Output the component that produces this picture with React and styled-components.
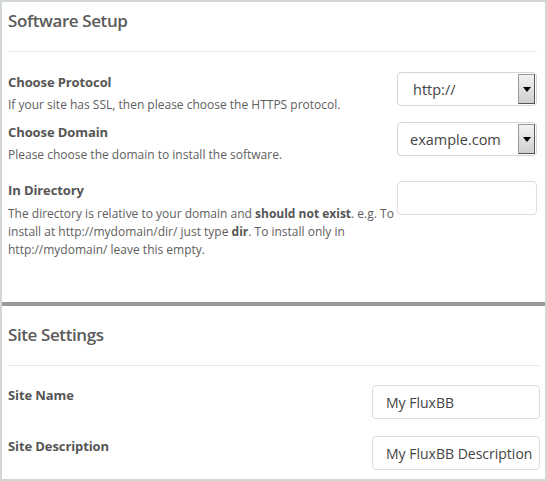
import React from "react";
import styled, { createGlobalStyle } from "styled-components";

const Global = createGlobalStyle`
  html, body { margin: 0; padding: 0; background: #fff; }
  body { font-family: "Open Sans", "Liberation Sans", sans-serif; color: #555; }
`;

const Frame = styled.div`
  width: 547px;
  height: 481px;
  box-sizing: border-box;
  border: 2px solid #d2d8d2;
  background: #fff;
  overflow: hidden;
`;

const Section = styled.section`
  padding: ${(p) => p.$pad || "0 8px 0 6px"};
`;

const Heading = styled.h2`
  margin: 0;
  font-size: 17px;
  font-weight: 600;
  color: #5a5a5a;
  line-height: 24px;
  letter-spacing: -0.4px;
  padding-top: ${(p) => p.$top}px;
`;

const Rule = styled.hr`
  border: 0;
  border-top: 1px solid ${(p) => p.$color || "#e4ecec"};
  margin: ${(p) => p.$mt}px 0 0;
`;

const Spacer = styled.div`
  height: ${(p) => p.$h}px;
`;

const ThickRule = styled.div`
  height: 4px;
  background: #9a9a9a;
`;

const Row = styled.div`
  display: flex;
  justify-content: space-between;
  align-items: flex-start;
  margin-top: ${(p) => p.$mt}px;
`;

const LabelCol = styled.div`
  flex: 1;
  min-width: 0;
`;

const Label = styled.div`
  font-size: 13px;
  font-weight: 700;
  color: #555;
  line-height: 20px;
  letter-spacing: -0.1px;
`;

const Desc = styled.div`
  font-size: 12px;
  color: #5e5e5e;
  line-height: 18px;
  margin-top: ${(p) => p.$mt}px;
  b { font-weight: 700; color: #555; }
`;

const SelectBox = styled.div`
  width: 140px;
  height: 34px;
  box-sizing: border-box;
  border: 1px solid #ddd0dd;
  border-radius: 4px;
  display: flex;
  align-items: center;
  justify-content: space-between;
  background: #fff;
  flex-shrink: 0;
`;

const SelectText = styled.span`
  font-size: 14.5px;
  color: #444;
  padding-left: ${(p) => p.$pl}px;
`;

const Arrow = styled.span`
  width: 17px;
  height: 30px;
  margin-right: 1px;
  box-sizing: border-box;
  border: 1px solid #555;
  border-top-color: #999;
  border-left-color: #999;
  background: linear-gradient(#f2f2f2, #cfcfcf);
  display: flex;
  align-items: center;
  justify-content: center;
  &::after {
    content: "";
    border-left: 4px solid transparent;
    border-right: 4px solid transparent;
    border-top: 5px solid #000;
  }
`;

const TextBox = styled.div`
  width: ${(p) => p.$w}px;
  height: 34px;
  box-sizing: border-box;
  border: 1px solid #e2dce2;
  border-radius: 4px;
  display: flex;
  align-items: center;
  padding-left: 13px;
  font-size: 14px;
  color: #444;
  flex-shrink: 0;
  margin-top: ${(p) => p.$mt || 0}px;
  white-space: nowrap;
`;

export default function App() {
  return (
    <Frame>
      <Global />
      <Section>
        <Heading $top={7}>Software Setup</Heading>
        <Rule $mt={18} />
        <Row $mt={20}>
          <LabelCol>
            <Label>Choose Protocol</Label>
            <Desc $mt={4}>If your site has SSL, then please choose the HTTPS protocol.</Desc>
          </LabelCol>
          <SelectBox>
            <SelectText $pl={15}>http://</SelectText>
            <Arrow />
          </SelectBox>
        </Row>
        <Row $mt={8}>
          <LabelCol>
            <Label>Choose Domain</Label>
            <Desc $mt={4}>Please choose the domain to install the software.</Desc>
          </LabelCol>
          <SelectBox>
            <SelectText $pl={12}>example.com</SelectText>
            <Arrow />
          </SelectBox>
        </Row>
        <Row $mt={16}>
          <LabelCol>
            <Label>In Directory</Label>
            <Desc $mt={5}>
              The directory is relative to your domain and <b>should not exist</b>. e.g. To
              install at http://mydomain/dir/ just type <b>dir</b>. To install only in
              http://mydomain/ leave this empty.
            </Desc>
          </LabelCol>
          <TextBox $w={140} $mt={1} />
        </Row>
      </Section>
      <Spacer $h={43} />
      <ThickRule />
      <Section $pad="0 5px 0 6px">
        <Heading $top={17}>Site Settings</Heading>
        <Rule $mt={18} $color="#eee4ee" />
        <Row $mt={19}>
          <LabelCol>
            <Label>Site Name</Label>
          </LabelCol>
          <TextBox $w={168}>My FluxBB</TextBox>
        </Row>
        <Row $mt={17}>
          <LabelCol>
            <Label>Site Description</Label>
          </LabelCol>
          <TextBox $w={168}>My FluxBB Description</TextBox>
        </Row>
      </Section>
    </Frame>
  );
}
